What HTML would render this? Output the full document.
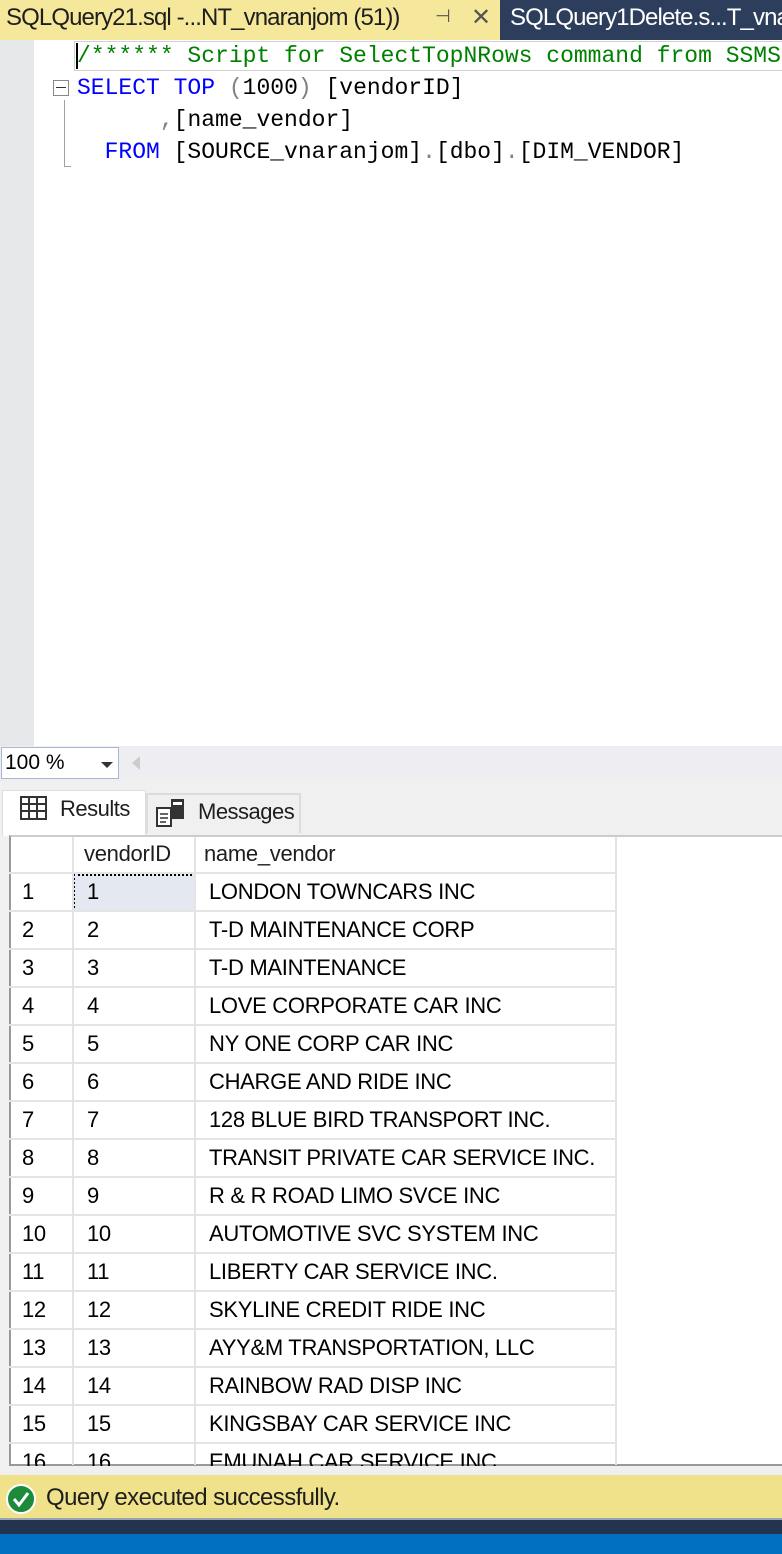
<!DOCTYPE html>
<html><head><meta charset="utf-8"><style>
*{margin:0;padding:0;box-sizing:border-box}
body{width:782px;height:1554px;position:relative;overflow:hidden;background:#fff;font-family:"Liberation Sans",sans-serif}
.a{position:absolute}
.code{font-family:"Liberation Mono",monospace;font-size:23px;white-space:pre;line-height:32px}
.k{color:#0000ff}.g{color:#008000}.d{color:#808080}.t{color:#000}
.cell{position:absolute;font-size:22px;color:#000;white-space:nowrap;letter-spacing:-0.3px;line-height:38px}
.hl{position:absolute;left:9px;width:606px;height:2px;background:#e4e4e4}
.vl{position:absolute;width:2px;background:#e4e4e4}
</style></head><body>
<!-- tab bar -->
<div class="a" style="left:0;top:0;width:500px;height:40px;background:#f5e89b"></div>
<div class="a" style="left:500px;top:0;width:282px;height:40px;background:#2c3e5b"></div>
<div class="a" style="left:6px;top:4px;font-size:24px;letter-spacing:-0.9px;color:#1e1e1e;white-space:nowrap">SQLQuery21.sql -...NT_vnaranjom (51))</div>
<div class="a" style="left:435px;top:6px;font-size:18px;color:#555">⊣</div>
<div class="a" style="left:471px;top:3px;font-size:24px;color:#555">✕</div>
<div class="a" style="left:510px;top:4px;font-size:24px;letter-spacing:-0.9px;color:#fff;white-space:nowrap">SQLQuery1Delete.s...T_vna</div>
<!-- editor -->
<div class="a" style="left:0;top:40px;width:34px;height:706px;background:#e6e7e8"></div>
<div class="a" style="left:74px;top:41px;width:708px;height:30px;border:1px solid #d0d0d0;border-right:none"></div>
<div class="a" style="left:76px;top:43px;width:2px;height:26px;background:#000"></div>
<div class="a" style="left:53px;top:80px;width:16px;height:16px;border:1px solid #888;background:#fff"></div>
<div class="a" style="left:56px;top:87px;width:10px;height:1px;background:#333"></div>
<div class="a" style="left:64px;top:100px;width:1px;height:66px;background:#a0a0a0"></div>
<div class="a" style="left:64px;top:166px;width:7px;height:1px;background:#a0a0a0"></div>
<div class="a code" style="left:77px;top:40px"><span class="g">/****** Script for SelectTopNRows command from SSMS</span>
<span class="k">SELECT TOP</span> <span class="d">(</span>1000<span class="d">)</span> [vendorID]
      <span class="d">,</span>[name_vendor]
  <span class="k">FROM</span> [SOURCE_vnaranjom]<span class="d">.</span>[dbo]<span class="d">.</span>[DIM_VENDOR]</div>
<!-- zoom bar -->
<div class="a" style="left:0;top:746px;width:782px;height:34px;background:#eeeef2"></div>
<div class="a" style="left:1px;top:747px;width:118px;height:32px;border:1px solid #a9b8d2;background:#fff"></div>
<div class="a" style="left:5px;top:751px;font-size:21px">100 %</div>
<div class="a" style="left:101px;top:762px;width:0;height:0;border-left:6px solid transparent;border-right:6px solid transparent;border-top:6px solid #333"></div>
<div class="a" style="left:132px;top:756px;width:0;height:0;border-top:7px solid transparent;border-bottom:7px solid transparent;border-right:8px solid #ccc"></div>
<!-- results tabs area -->
<div class="a" style="left:0;top:780px;width:782px;height:695px;background:#f0f0f0"></div>
<div class="a" style="left:2px;top:790px;width:144px;height:46px;background:#fff;border:1px solid #ddd;border-bottom:none"></div>
<div class="a" style="left:146px;top:793px;width:155px;height:40px;background:#f0f0f0;border:2px solid #dcdcdc;border-bottom:none"></div>
<svg class="a" style="left:20px;top:796px" width="27" height="24"><rect x="1" y="1" width="25" height="22" fill="none" stroke="#333" stroke-width="2"/><path d="M1 8H26M1 15H26M9 1V23M17 1V23" stroke="#333" stroke-width="2"/></svg>
<div class="a" style="left:60px;top:796px;font-size:22px;letter-spacing:-0.5px;color:#1e1e1e">Results</div>
<svg class="a" style="left:156px;top:798px" width="30" height="30"><rect x="1" y="10" width="14" height="18" fill="#fff" stroke="#333" stroke-width="2"/><path d="M4 16h8M4 20h8M4 24h6" stroke="#333" stroke-width="1.5"/><rect x="15" y="1" width="13" height="20" fill="#333"/><rect x="17" y="4" width="9" height="3" fill="#fff"/></svg>
<div class="a" style="left:198px;top:799px;font-size:22px;letter-spacing:-0.5px;color:#1e1e1e">Messages</div>
<!-- grid -->
<div class="a" style="left:9px;top:835px;width:773px;height:631px;background:#fff;border-left:2px solid #999;border-top:2px solid #ccc;border-bottom:2px solid #999"></div>
<div class="a" style="left:0;top:1468px;width:782px;height:6px;background:#f0f0f0"></div>
<div class="a" style="left:73px;top:874px;width:123px;height:38px;background:#e4e8f0;border:2px dotted #000"></div>
<div class="vl" style="left:72px;top:837px;height:628px"></div>
<div class="vl" style="left:194px;top:837px;height:628px"></div>
<div class="vl" style="left:615px;top:837px;height:628px"></div>
<div class="cell" style="left:84px;top:835px;color:#1e1e1e">vendorID</div>
<div class="cell" style="left:204px;top:835px;color:#1e1e1e">name_vendor</div>
<div style="position:absolute;left:0;top:0;width:782px;height:1466px;overflow:hidden">
<script>
var n=["LONDON TOWNCARS INC","T-D MAINTENANCE CORP","T-D MAINTENANCE","LOVE CORPORATE CAR INC","NY ONE CORP CAR INC","CHARGE AND RIDE INC","128 BLUE BIRD TRANSPORT INC.","TRANSIT PRIVATE CAR SERVICE INC.","R &amp; R ROAD LIMO SVCE INC","AUTOMOTIVE SVC SYSTEM INC","LIBERTY CAR SERVICE INC.","SKYLINE CREDIT RIDE INC","AYY&amp;M TRANSPORTATION, LLC","RAINBOW RAD DISP INC","KINGSBAY CAR SERVICE INC","EMUNAH CAR SERVICE INC"];
var h="";
for(var i=0;i<16;i++){var y=873+i*38;
h+='<div class="hl" style="top:'+(y-1)+'px"></div>';
h+='<div class="cell" style="left:22px;top:'+y+'px">'+(i+1)+'</div>';
h+='<div class="cell" style="left:87px;top:'+y+'px">'+(i+1)+'</div>';
h+='<div class="cell" style="left:209px;top:'+y+'px">'+n[i]+'</div>';}
document.write(h);
</script>
</div>
<!-- status -->
<div class="a" style="left:0;top:1475px;width:782px;height:45px;background:#f0e28b;border-bottom:2px solid #9aa3b3"></div>
<svg class="a" style="left:5px;top:1483px" width="32" height="32"><circle cx="16" cy="16" r="14" fill="#1b8a3a" stroke="#fff" stroke-width="2"/><path d="M9 16l5 6 9-12" fill="none" stroke="#fff" stroke-width="3"/></svg>
<div class="a" style="left:46px;top:1484px;font-size:24px;letter-spacing:-0.6px;color:#1e1e1e">Query executed successfully.</div>
<div class="a" style="left:0;top:1520px;width:782px;height:14px;background:#23344e"></div>
<div class="a" style="left:0;top:1534px;width:782px;height:20px;background:#006fc0"></div>
</body></html>
